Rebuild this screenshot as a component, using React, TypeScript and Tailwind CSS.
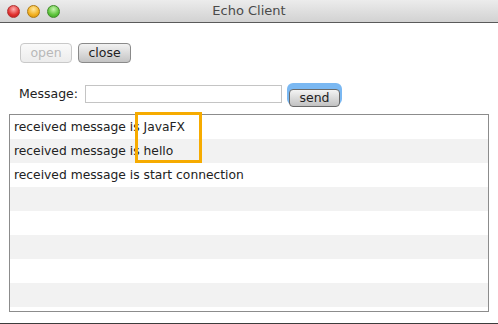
import React from 'react';

const rows = ['received message is JavaFX', 'received message is hello', 'received message is start connection'];

export default function App() {
  const slots = Array.from({ length: 9 }, (_, i) => rows[i] ?? '');

  return (
    <div
      className="relative w-[498px] h-[324px] bg-white flex flex-col border-b border-[#3c3c3c] overflow-hidden"
      style={{ fontFamily: '"DejaVu Sans", Verdana, sans-serif' }}
    >
      {/* Title bar */}
      <div className="relative h-[23px] shrink-0 flex items-center bg-gradient-to-b from-[#ececec] to-[#d2d2d2] border-b border-[#5a5a5a]">
        <div className="flex items-center gap-[7px] pl-[7px]">
          <span className="w-[13px] h-[13px] rounded-full border border-[#b03030] bg-[radial-gradient(circle_at_50%_30%,#ffb0b0,#e0302e_60%,#b81c1c)]" />
          <span className="w-[13px] h-[13px] rounded-full border border-[#b07a10] bg-[radial-gradient(circle_at_50%_30%,#ffe9a0,#f2b020_60%,#cc8a08)]" />
          <span className="w-[13px] h-[13px] rounded-full border border-[#3f8a2a] bg-[radial-gradient(circle_at_50%_30%,#c8f5b0,#5cc33a_60%,#3a9a22)]" />
        </div>
        <div className="absolute inset-0 flex items-center justify-center text-[13px] text-[#4a4a4a]">Echo Client</div>
      </div>

      {/* Buttons */}
      <div className="flex gap-[6px] pl-[20px] pt-[20px]">
        <button className="w-[52px] h-[20px] rounded-[4px] border border-[#c9c9c9] bg-gradient-to-b from-[#fafafa] to-[#ececec] text-[12.5px] leading-none text-[#b8b8b8]">
          open
        </button>
        <button className="w-[53px] h-[20px] rounded-[4px] border border-[#8a8a8a] bg-gradient-to-b from-[#f2f2f2] to-[#c4c4c4] text-[12.5px] leading-none text-[#222]">
          close
        </button>
      </div>

      {/* Message row */}
      <div className="flex items-center pl-[19px] pt-[20px] h-[42px]">
        <span className="text-[12.5px] text-[#222] w-[66px]">Message:</span>
        <div className="w-[197px] h-[18px] border border-[#c4c4c4] bg-white" />
        <div className="ml-[5px] w-[55px] h-[22px] rounded-[6px] bg-[#7ab8f2] p-[2px]">
          <button className="w-full h-full rounded-[4px] border border-[#6a6a6a] bg-gradient-to-b from-[#f4f4f4] to-[#c2c2c2] text-[12.5px] leading-none text-[#222]">
            send
          </button>
        </div>
      </div>

      {/* List */}
      <div className="ml-[9px] mt-[9px] w-[480px] h-[198px] border border-[#8c8c8c] overflow-hidden">
        {slots.map((text, i) => (
          <div
            key={i}
            className={`h-[24px] flex items-center pl-[4px] text-[12.3px] text-[#222] ${i % 2 === 1 ? 'bg-[#f2f2f2]' : 'bg-white'}`}
          >
            {text}
          </div>
        ))}
      </div>

      {/* Annotation box */}
      <div className="absolute left-[135px] top-[112px] w-[67px] h-[51px] border-[3px] border-[#f6ab00]" />
    </div>
  );
}
